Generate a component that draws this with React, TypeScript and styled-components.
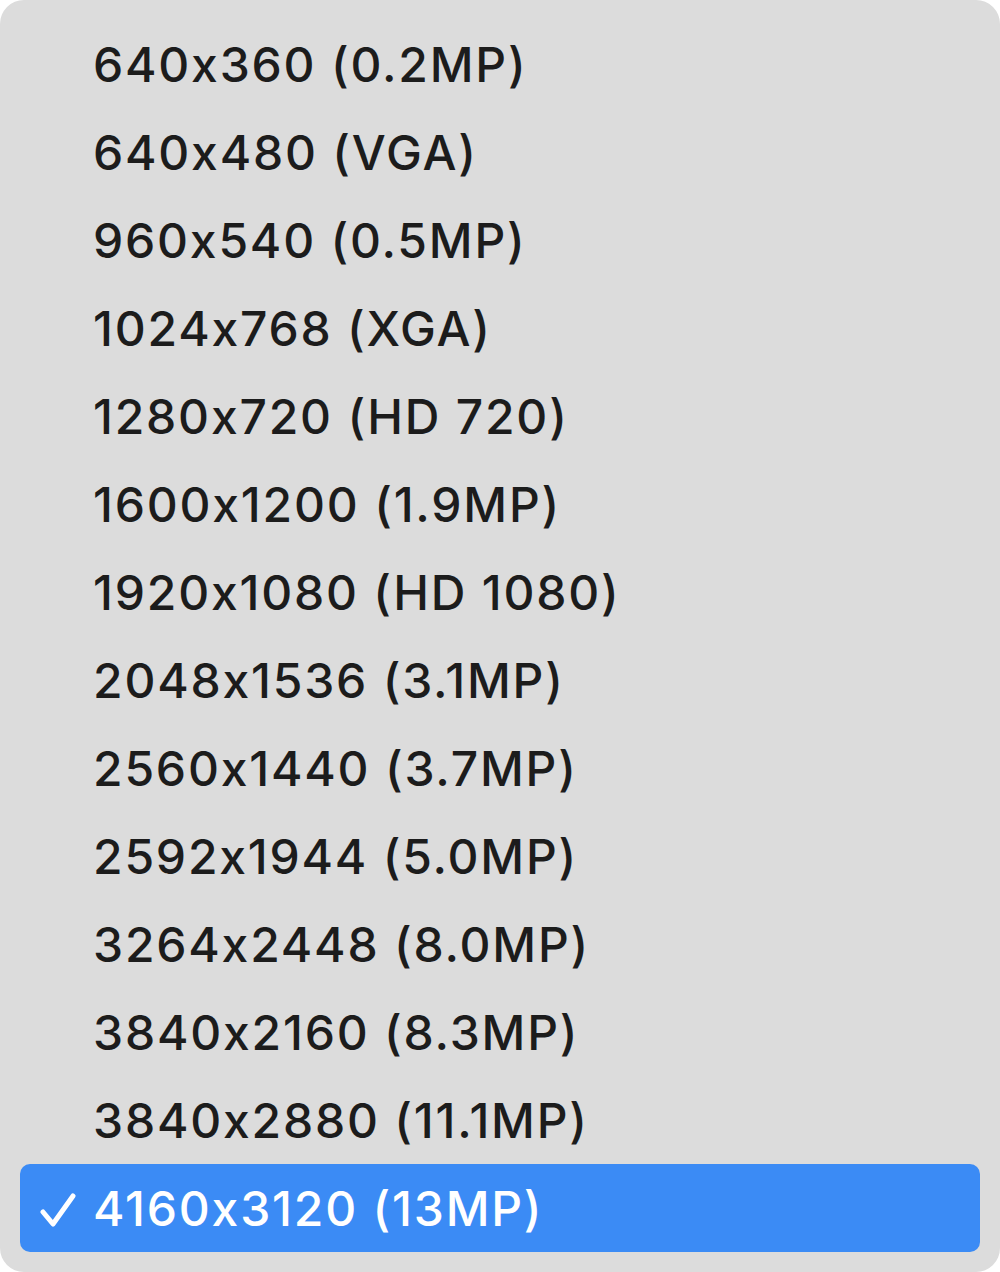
import React from 'react';
import styled, { createGlobalStyle } from 'styled-components';

const GlobalStyle = createGlobalStyle`
  html, body {
    margin: 0;
    padding: 0;
    background: #ffffff;
  }
`;

const Menu = styled.div`
  width: 1000px;
  height: 1272px;
  box-sizing: border-box;
  padding: 20px 20px;
  background: #dcdcdc;
  border-radius: 24px;
  display: flex;
  flex-direction: column;
  font-family: Inter, "Liberation Sans", sans-serif;
`;

const Item = styled.div<{ $selected?: boolean }>`
  height: 88px;
  flex: none;
  display: flex;
  align-items: center;
  border-radius: 10px;
  padding-left: 73px;
  position: relative;
  font-size: 48px;
  font-weight: 500;
  letter-spacing: 1.8px;
  color: ${p => (p.$selected ? '#ffffff' : '#1c1c1c')};
  background: ${p => (p.$selected ? '#3b8bf5' : 'transparent')};
`;

const Check = styled.svg`
  position: absolute;
  left: 20px;
  top: 28px;
  width: 36px;
  height: 36px;
`;

const resolutions = [
  '640x360 (0.2MP)',
  '640x480 (VGA)',
  '960x540 (0.5MP)',
  '1024x768 (XGA)',
  '1280x720 (HD 720)',
  '1600x1200 (1.9MP)',
  '1920x1080 (HD 1080)',
  '2048x1536 (3.1MP)',
  '2560x1440 (3.7MP)',
  '2592x1944 (5.0MP)',
  '3264x2448 (8.0MP)',
  '3840x2160 (8.3MP)',
  '3840x2880 (11.1MP)',
  '4160x3120 (13MP)',
];

const App: React.FC = () => {
  const selected = resolutions.length - 1;
  return (
    <>
      <GlobalStyle />
      <Menu>
        {resolutions.map((r, i) => (
          <Item key={r} $selected={i === selected}>
            {i === selected && (
              <Check viewBox="0 0 36 36">
                <path d="M3 20 L13 32 L33 4" fill="none" stroke="#fff" strokeWidth="5" strokeLinecap="round" strokeLinejoin="round" />
              </Check>
            )}
            {r}
          </Item>
        ))}
      </Menu>
    </>
  );
};

export default App;
